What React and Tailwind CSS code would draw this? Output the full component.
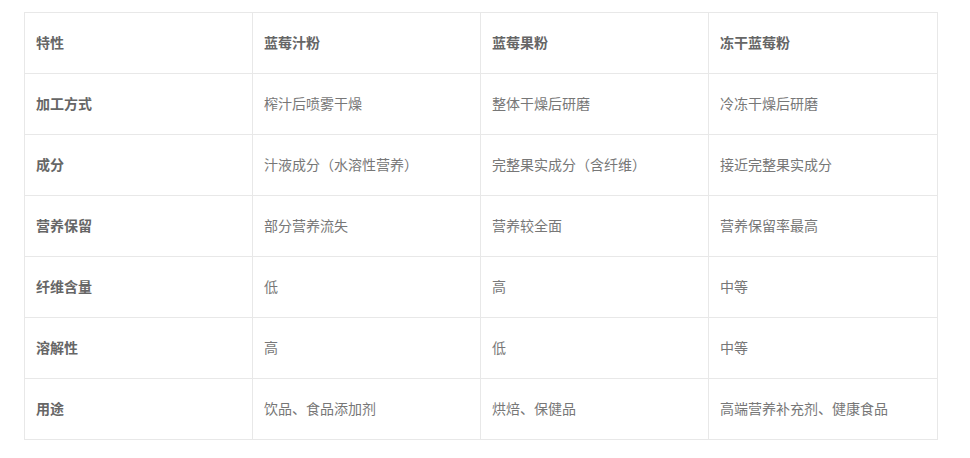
import React from "react";

const rows = [
  ["特性", "蓝莓汁粉", "蓝莓果粉", "冻干蓝莓粉"],
  ["加工方式", "榨汁后喷雾干燥", "整体干燥后研磨", "冷冻干燥后研磨"],
  ["成分", "汁液成分（水溶性营养）", "完整果实成分（含纤维）", "接近完整果实成分"],
  ["营养保留", "部分营养流失", "营养较全面", "营养保留率最高"],
  ["纤维含量", "低", "高", "中等"],
  ["溶解性", "高", "低", "中等"],
  ["用途", "饮品、食品添加剂", "烘焙、保健品", "高端营养补充剂、健康食品"],
];

export default function App() {
  return (
    <div className="bg-white w-[970px] h-[458px] pt-[12px] pl-[24px]" style={{ fontFamily: '"Noto Sans CJK SC", "Noto Sans", sans-serif' }}>
      <table className="border-collapse w-[913px] table-fixed text-[14px]">
        <colgroup>
          <col className="w-[228px]" />
          <col className="w-[228px]" />
          <col className="w-[228px]" />
          <col className="w-[229px]" />
        </colgroup>
        <tbody>
          {rows.map((r, i) => (
            <tr key={i} className="h-[61px]">
              {r.map((c, j) => (
                <td
                  key={j}
                  className={
                    "border border-[#e8e8e8] pl-[11px] pr-[12px] pb-[1px] align-middle " +
                    (i === 0 || j === 0 ? "font-semibold text-[#666]" : "font-normal text-[#777]")
                  }
                >
                  {c}
                </td>
              ))}
            </tr>
          ))}
        </tbody>
      </table>
    </div>
  );
}
